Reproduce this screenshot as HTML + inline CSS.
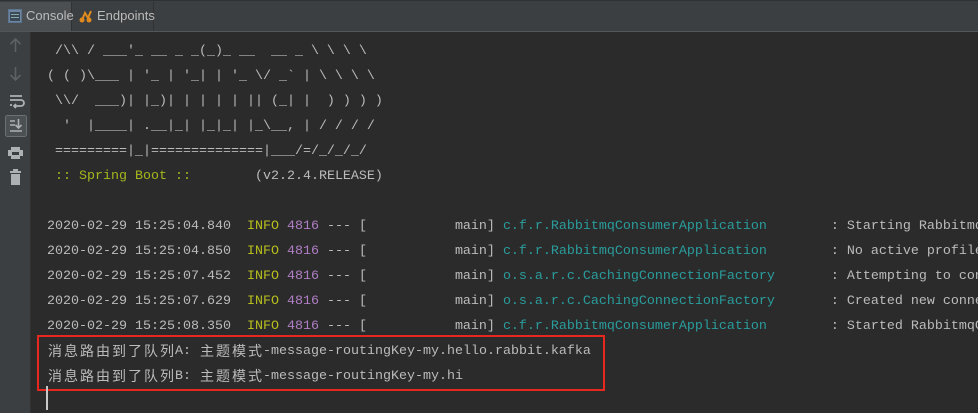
<!DOCTYPE html>
<html><head><meta charset="utf-8"><style>
*{margin:0;padding:0;box-sizing:border-box}
body{width:978px;height:413px;overflow:hidden;background:#2b2b2b;position:relative;font-family:"Liberation Mono","Noto Sans CJK SC",monospace}
#tabs{position:absolute;left:0;top:0;width:978px;height:32px;background:#3c3f41;border-top:1px solid #2f3133;border-bottom:1px solid #515658}
.tab{position:absolute;top:1px;height:29px;font:13px "Liberation Sans",sans-serif;color:#bbbbbb;line-height:28px}
#gut{position:absolute;left:0;top:32px;width:31px;height:381px;background:#3c3f41;border-right:1px solid #323232}
#con{position:absolute;left:47px;top:39px;width:931px;height:374px;overflow:hidden;font-size:13.33px;line-height:25px;white-space:pre;color:#bbbbbb}
.c{display:inline-block;width:16px;font-family:"Noto Sans CJK SC",sans-serif;font-size:14px;line-height:20px;text-align:center;vertical-align:top;margin-top:2px}
.g{color:#a5b71d}.y{color:#b8bf1d}.p{color:#b07ec4}.t{color:#2a9c9c}
#box{position:absolute;left:37px;top:335px;width:568px;height:56px;border:2px solid #e8281e}
#cur{position:absolute;left:46px;top:386px;width:2px;height:24px;background:#c8c8c8}
</style></head><body>
<div id="tabs">
 <div class="tab" style="left:0;width:72px;background:#4b4f52;border-right:1px solid #323232">
  <svg style="position:absolute;left:8px;top:7px" width="14" height="14"><rect x="0.5" y="0.5" width="13" height="13" fill="#6e86a0" stroke="#5a7390"/><rect x="2" y="3" width="10" height="9" fill="#3c4a58"/><rect x="3" y="5" width="8" height="1" fill="#8aa"/><rect x="3" y="8" width="8" height="1" fill="#8aa"/></svg>
  <span style="position:absolute;left:26px">Console</span></div>
 <div class="tab" style="left:73px;width:81px;border-right:1px solid #323232">
  <svg style="position:absolute;left:6px;top:7px" width="14" height="14"><path d="M3 11 L6 4 L9 9 L12 2" stroke="#e08a1e" stroke-width="2" fill="none"/><circle cx="3" cy="11" r="2.5" fill="#e08a1e"/><circle cx="10" cy="11" r="2.5" fill="#e08a1e"/></svg>
  <span style="position:absolute;left:24px">Endpoints</span></div>
</div>
<div id="gut">
 <svg width="31" height="170" style="position:absolute;left:0;top:0">
  <g stroke="#5d6164" stroke-width="1.6" fill="none">
   <path d="M15.5 7v13M10.5 12l5-5 5 5"/>
   <path d="M15.5 35v13M10.5 43l5 5 5-5"/>
  </g>
  <g stroke="#aeb1b3" stroke-width="1.8" fill="none">
   <path d="M10 64h12M10 68h11a3 3 0 010 6h-6"/><path d="M16 72l-2 2 2 2"/><path d="M10 73h2"/>
  </g>
  <rect x="5.5" y="83.5" width="21" height="21" rx="2" fill="#4b5052" stroke="#6b7073"/>
  <g stroke="#aeb1b3" stroke-width="1.6" fill="none"><path d="M10 89h5M10 93h5M10 99h12M18.5 87v9M15.5 93l3 3 3-3"/></g>
  <path d="M11 115h9v3h3v6h-3v3h-9v-3h-3v-6h3z" fill="#aeb1b3"/><rect x="12" y="120" width="7" height="3" fill="#3c3f41"/>
  <path d="M10 140h11M13 138h5" stroke="#aeb1b3" stroke-width="2"/><rect x="11" y="142" width="9" height="11" fill="#aeb1b3"/>
 </svg>
</div>
<div id="con"> /\\ / ___'_ __ _ _(_)_ __  __ _ \ \ \ \
( ( )\___ | '_ | '_| | '_ \/ _` | \ \ \ \
 \\/  ___)| |_)| | | | | || (_| |  ) ) ) )
  '  |____| .__|_| |_|_| |_\__, | / / / /
 =========|_|==============|___/=/_/_/_/
<span class="g"> :: Spring Boot :: </span>       (v2.2.4.RELEASE)

2020-02-29 15:25:04.840  <span class="y">INFO</span> <span class="p">4816</span> --- [           main] <span class="t">c.f.r.RabbitmqConsumerApplication</span>        : Starting RabbitmqConsumerApplication
2020-02-29 15:25:04.850  <span class="y">INFO</span> <span class="p">4816</span> --- [           main] <span class="t">c.f.r.RabbitmqConsumerApplication</span>        : No active profile set
2020-02-29 15:25:07.452  <span class="y">INFO</span> <span class="p">4816</span> --- [           main] <span class="t">o.s.a.r.c.CachingConnectionFactory</span>       : Attempting to connect
2020-02-29 15:25:07.629  <span class="y">INFO</span> <span class="p">4816</span> --- [           main] <span class="t">o.s.a.r.c.CachingConnectionFactory</span>       : Created new connection
2020-02-29 15:25:08.350  <span class="y">INFO</span> <span class="p">4816</span> --- [           main] <span class="t">c.f.r.RabbitmqConsumerApplication</span>        : Started RabbitmqConsumer
<span class="c">消</span><span class="c">息</span><span class="c">路</span><span class="c">由</span><span class="c">到</span><span class="c">了</span><span class="c">队</span><span class="c">列</span>A: <span class="c">主</span><span class="c">题</span><span class="c">模</span><span class="c">式</span>-message-routingKey-my.hello.rabbit.kafka
<span class="c">消</span><span class="c">息</span><span class="c">路</span><span class="c">由</span><span class="c">到</span><span class="c">了</span><span class="c">队</span><span class="c">列</span>B: <span class="c">主</span><span class="c">题</span><span class="c">模</span><span class="c">式</span>-message-routingKey-my.hi</div>
<div id="box"></div>
<div id="cur"></div>
</body></html>
